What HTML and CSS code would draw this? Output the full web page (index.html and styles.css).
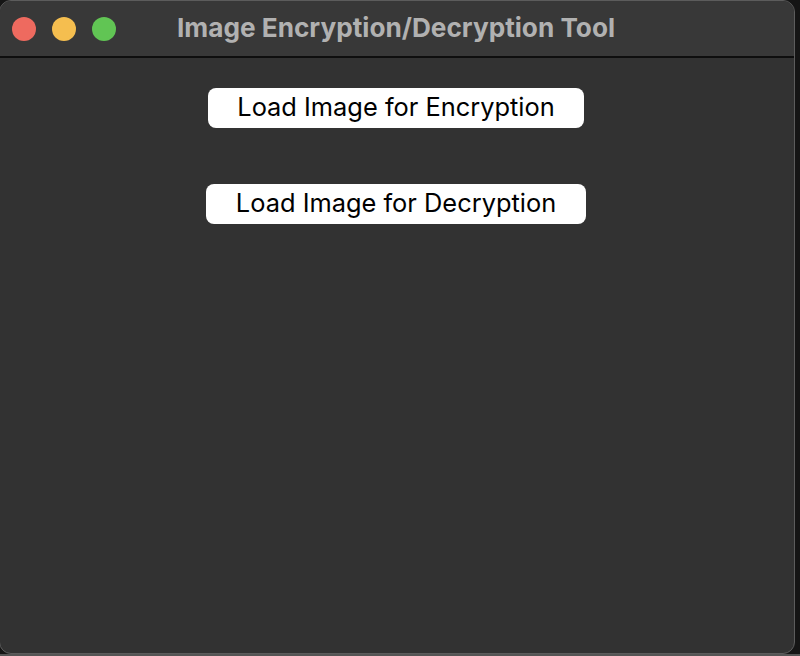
FILE: index.html
```html
<!DOCTYPE html>
<html>
<head>
<meta charset="utf-8">
<link rel="stylesheet" href="styles.css">
</head>
<body>
<div class="screen">
  <div class="window">
    <div class="titlebar">
      <div class="lights">
        <span class="light red"></span>
        <span class="light yellow"></span>
        <span class="light green"></span>
      </div>
      <div class="title">Image Encryption/Decryption Tool</div>
    </div>
    <div class="content">
      <button class="btn btn-enc">Load Image for Encryption</button>
      <button class="btn btn-dec">Load Image for Decryption</button>
    </div>
  </div>
  <div class="bottom-strip"></div>
</div>
</body>
</html>
```
FILE: styles.css
```css
html, body {
  margin: 0;
  padding: 0;
  background: #151515;
  width: 800px;
  height: 656px;
  overflow: hidden;
}
.screen {
  width: 800px;
  height: 656px;
  display: flex;
  flex-direction: column;
}
.window {
  box-sizing: border-box;
  width: 796px;
  height: 654px;
  background: #323232;
  border: 1px solid #5c5c5c;
  border-radius: 12px;
  overflow: hidden;
  display: flex;
  flex-direction: column;
  margin-left: -1px;
}
.titlebar {
  position: relative;
  height: 55px;
  background: #383838;
  border-bottom: 2px solid #0e0e0e;
  display: flex;
  align-items: center;
  flex-shrink: 0;
}
.lights {
  display: flex;
  gap: 16px;
  padding-left: 12px;
}
.light {
  width: 24px;
  height: 24px;
  border-radius: 50%;
  display: block;
}
.red { background: #ee6a5f; }
.yellow { background: #f5be4f; }
.green { background: #61c554; }
.title {
  position: absolute;
  left: 0;
  right: 0;
  top: 0;
  height: 55px;
  line-height: 53px;
  text-align: center;
  font-family: Inter, "Liberation Sans", sans-serif;
  font-weight: 700;
  font-size: 26.2px;
  color: #b1b1b1;
  padding-right: 2px;
  pointer-events: none;
}
.content {
  flex: 1;
  display: flex;
  flex-direction: column;
  align-items: center;
  padding-top: 30px;
  gap: 56px;
  padding-right: 2px;
}
.btn {
  height: 40px;
  background: #ffffff;
  border: none;
  border-radius: 8px;
  font-family: Inter, "Liberation Sans", sans-serif;
  font-size: 25.4px;
  color: #000000;
  padding: 0 0 2px;
  margin: 0;
  line-height: 36px;
}
.btn-enc { width: 376px; }
.btn-dec { width: 380px; }
.bottom-strip {
  height: 2px;
  background: #555555;
}
```
